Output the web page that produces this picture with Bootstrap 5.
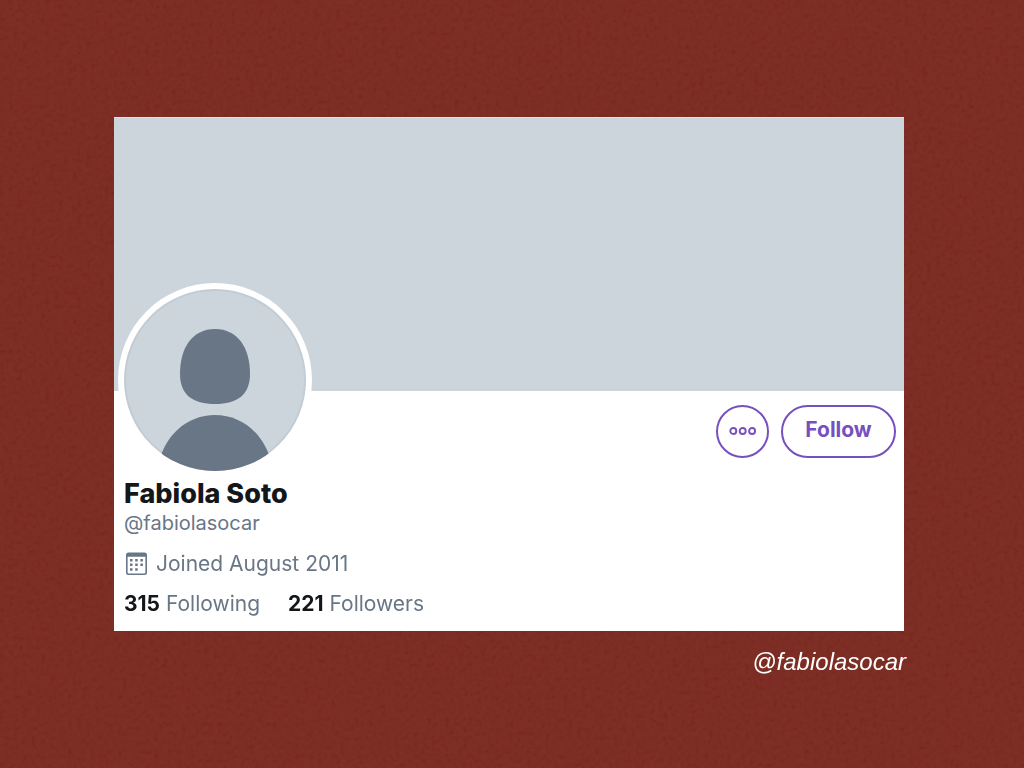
<!DOCTYPE html>
<html lang="en">
<head>
<meta charset="utf-8">
<meta name="viewport" content="width=device-width, initial-scale=1">
<title>Fabiola Soto (@fabiolasocar)</title>
<link rel="stylesheet" href="https://cdn.jsdelivr.net/npm/bootstrap@5.3.0/dist/css/bootstrap.min.css">
<style>
:root { --slate: #697686; --ice: #cdd5dc; --violet: #7650bf; }
body { background: #7b2a20; font-family: Inter, "Liberation Sans", sans-serif; }
.grain { z-index: 0; opacity: .035; }
.stage { z-index: 1; padding: 117px 120px 40px 114px; }
.profile { border-top: 1px solid #e6e1e2; color: #14171a; }
.banner { background: var(--ice); height: 273px; }
.details { padding: 14px 8px 15px 10px; font-size: 21px; line-height: 24px; }
.avatar { width: 194px; height: 194px; margin: -122px 0 0 -6px; }
.muted { color: var(--slate); }
.name { font-size: 27px; line-height: 34px; font-weight: 800; }
.handle { font-size: 20px; line-height: 25px; }
.actions { gap: 12px; }
.pill { height: 53px; border: 2px solid var(--violet); color: var(--violet); font-size: 21px; line-height: 24px; font-weight: 700; }
.pill:hover { background: #f3eefb; color: var(--violet); border-color: var(--violet); }
.more { width: 53px; }
.follow { width: 115px; }
.stats { column-gap: 28px; }
.stats b { color: #14171a; font-weight: 700; }
.credit { font: italic 24px/32px "Liberation Sans", Arial, sans-serif; margin: 15px -2px 0 0; }
</style>
<script src="https://cdn.jsdelivr.net/npm/bootstrap@5.3.0/dist/js/bootstrap.bundle.min.js"></script>
</head>
<body>
<svg class="grain position-fixed top-0 start-0 w-100 h-100" aria-hidden="true">
  <filter id="paper"><feTurbulence type="fractalNoise" baseFrequency=".22" numOctaves="3" seed="4"/><feColorMatrix type="matrix" values="1.2 0 0 0 -.1  1.2 0 0 0 -.3  1.2 0 0 0 -.3  0 0 0 0 1"/></filter>
  <rect width="100%" height="100%" filter="url(#paper)"/>
</svg>
<main class="stage position-relative">
  <article class="profile bg-white">
    <div class="banner"></div>
    <div class="details">
      <div class="d-flex justify-content-between align-items-start">
        <svg class="avatar flex-shrink-0 position-relative" viewBox="0 0 194 194" role="img" aria-label="Default profile picture">
          <defs><clipPath id="face"><circle cx="97" cy="97" r="91"/></clipPath></defs>
          <circle cx="97" cy="97" r="97" fill="#fff"/>
          <circle cx="97" cy="97" r="91" fill="#cdd5dc"/>
          <g clip-path="url(#face)" fill="#697686">
            <path d="M97 46C120 46 132 65 132 91C132 112 119 121 97 121S62 112 62 91C62 65 74 46 97 46Z"/>
            <path d="M38 194C42 154 68 132 97 132S152 154 156 194Z"/>
          </g>
          <circle cx="97" cy="97" r="90" fill="none" stroke="#657382" stroke-width="2" stroke-opacity=".09"/>
        </svg>
        <div class="d-flex actions">
          <button type="button" class="btn pill more rounded-circle p-0 d-flex align-items-center justify-content-center" aria-label="More options">
            <svg width="28" height="12" viewBox="0 0 28 12" fill="none" stroke="currentColor" stroke-width="1.900"><circle cx="4.300" cy="5" r="3"/><circle cx="13.700" cy="5" r="3"/><circle cx="23.100" cy="5" r="3"/></svg>
          </button>
          <button type="button" class="btn pill follow rounded-pill px-0 pt-0 pb-1">Follow</button>
        </div>
      </div>
      <h1 class="name mb-0">Fabiola Soto</h1>
      <div class="muted handle">@fabiolasocar</div>
      <div class="muted d-flex align-items-center gap-2 my-3">
        <svg width="24" height="24" viewBox="0 0 24 24" fill="currentColor" aria-hidden="true">
          <path fill-rule="evenodd" d="M4.500 .5H20.500Q23 .5 23 3V20.500Q23 23 20.500 23H4.500Q2 23 2 20.500V3Q2 .5 4.500 .5ZM3.600 4.700V20.200Q3.600 21.400 4.800 21.400H20.200Q21.400 21.400 21.400 20.200V4.700Z"/>
          <path d="M6 7h2.500v2.500H6zM11.200 7h2.500v2.500h-2.500zM16.400 7h2.500v2.500h-2.500zM6 11.500h2.500V14H6zM11.200 11.500h2.500V14h-2.500zM16.400 11.500h2.500V14h-2.500zM6 16.200h2.500v2.500H6zM11.200 16.200h2.500v2.500h-2.500z"/>
        </svg>
        <span>Joined August 2011</span>
      </div>
      <div class="muted d-flex flex-wrap stats"><span><b>315</b> Following</span><span><b>221</b> Followers</span></div>
    </div>
  </article>
  <p class="credit text-white text-end mb-0">@fabiolasocar</p>
</main>
</body>
</html>
